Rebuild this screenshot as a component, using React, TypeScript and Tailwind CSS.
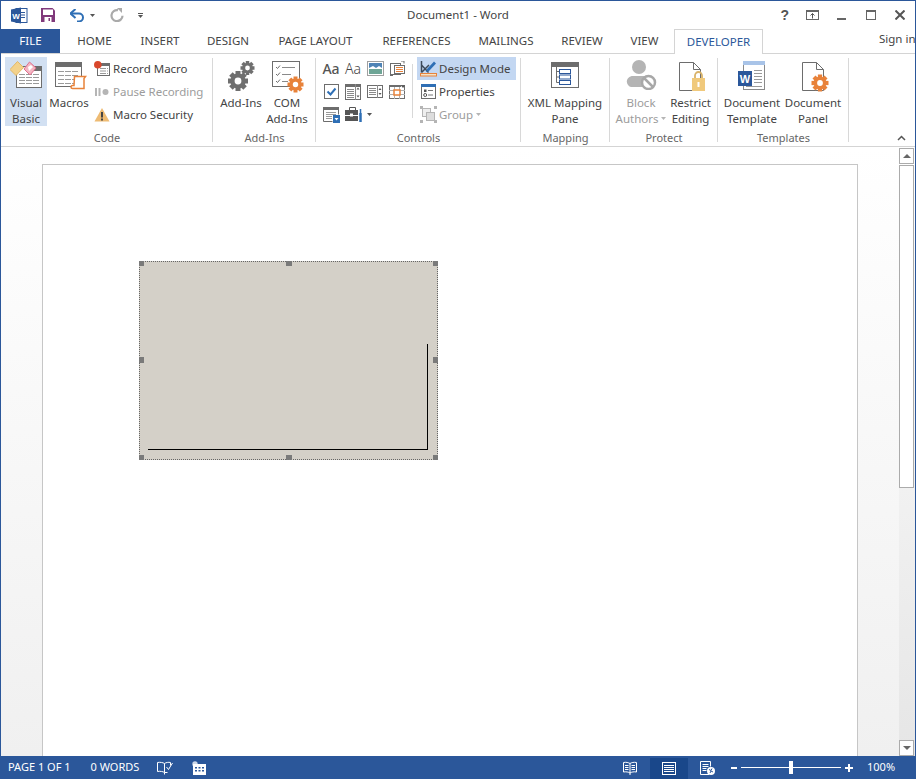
import type { ReactNode } from "react"

const GRAY = "#6f6f6f"
const ORANGE = "#e8823a"
const BLUE = "#2b579a"

function Gear({ x, y, r, color = GRAY, hole = "#ffffff" }: { x: number; y: number; r: number; color?: string; hole?: string }) {
  const teeth = [0, 45, 90, 135, 180, 225, 270, 315]
  const w = r * 0.5
  return (
    <g>
      {teeth.map((a) => (
        <rect key={a} x={x - w / 2} y={y - r} width={w} height={r * 0.5} fill={color} transform={`rotate(${a} ${x} ${y})`} />
      ))}
      <circle cx={x} cy={y} r={r * 0.76} fill={color} />
      <circle cx={x} cy={y} r={r * 0.34} fill={hole} />
    </g>
  )
}

function Sheet({ x, y, w, h, fold = 7, color = "#6d6d6d" }: { x: number; y: number; w: number; h: number; fold?: number; color?: string }) {
  return (
    <path
      d={`M${x + 0.5} ${y + 0.5}h${w - fold}l${fold} ${fold}v${h - fold}h-${w}zM${x + w - fold + 0.5} ${y + 0.5}v${fold}h${fold}`}
      fill="#fff"
      stroke={color}
    />
  )
}

function Icon({ w, h, children, className = "" }: { w: number; h: number; children: ReactNode; className?: string }) {
  return (
    <svg width={w} height={h} viewBox={`0 0 ${w} ${h}`} className={`shrink-0 block ${className}`}>
      {children}
    </svg>
  )
}

function TableLines({ x, y, w, rows, gap = 3, color = "#9a9a9a" }: { x: number; y: number; w: number; rows: number; gap?: number; color?: string }) {
  const lines = Array.from({ length: rows }, (_, i) => i)
  return (
    <>
      {lines.map((i) => (
        <path key={i} d={`M${x} ${y + i * gap + 0.5}h${w}`} stroke={color} strokeDasharray="6 1" />
      ))}
    </>
  )
}

function VisualBasicIcon() {
  return (
    <Icon w={32} h={32}>
      <rect x="6.500" y="6.500" width="25" height="21" fill="#fff" stroke="#6d6d6d" />
      <rect x="24" y="6" width="8" height="5" fill="#6d6d6d" />
      <TableLines x={9} y={14} w={20} rows={4} />
      <path d="M7.500 1.500l6 6-7.500 8-6-6z" fill="#f3d28c" stroke="#e3b867" />
      <path d="M19.500 2l6.500 6-6 7-6-6z" fill="#f4b6c2" stroke="#e06f8e" />
      <path d="M18 7l3-2 2 2-4 4z" fill="#fff" />
    </Icon>
  )
}

function MacrosIcon() {
  return (
    <Icon w={32} h={30}>
      <rect x="0.500" y="0.500" width="26" height="24" fill="#fff" stroke="#6d6d6d" />
      <rect x="0" y="0" width="27" height="5" fill="#6d6d6d" />
      <TableLines x={3} y={9} w={21} rows={4} gap={4} />
      <path d="M19.500 14.500h11l-1.500 2v10h-11.500c-2 0-2-3 0-3h1.500z" fill="#fff" stroke={ORANGE} strokeWidth="1.500" />
    </Icon>
  )
}

function RecordIcon() {
  return (
    <Icon w={16} h={16}>
      <rect x="3.500" y="2.500" width="12" height="12" fill="#fff" stroke="#6d6d6d" />
      <rect x="3" y="2" width="13" height="3" fill="#6d6d6d" />
      <TableLines x={6} y={7} w={8} rows={3} gap={2.500} />
      <circle cx="3.800" cy="3.800" r="3.800" fill="#d9472b" />
    </Icon>
  )
}

function PauseIcon() {
  return (
    <Icon w={16} h={16}>
      <rect x="1" y="4" width="2" height="8" fill="#b5b5b5" />
      <rect x="4.500" y="4" width="2" height="8" fill="#b5b5b5" />
      <circle cx="11.500" cy="8" r="3" fill="#b5b5b5" />
    </Icon>
  )
}

function WarnIcon() {
  return (
    <Icon w={16} h={16}>
      <path d="M8 1l7.500 13.500H.5z" fill="#eebb73" />
      <rect x="7" y="5" width="2" height="5.500" fill="#444" />
      <rect x="7" y="11.500" width="2" height="2" fill="#444" />
    </Icon>
  )
}

function AddInsIcon() {
  return (
    <Icon w={28} h={32}>
      <Gear x={11} y={21} r={10} />
      <Gear x={20.500} y={8} r={7} />
    </Icon>
  )
}

function ComAddInsIcon() {
  return (
    <Icon w={32} h={32}>
      <rect x="0.500" y="0.500" width="27" height="25" fill="#fff" stroke="#6d6d6d" />
      <path d="M4 6l1.500 1.500L8 4.500M4 13l1.500 1.500L8 11.500M4 20l1.500 1.500L8 18.500" fill="none" stroke="#6d6d6d" />
      <path d="M10 6.500h13M10 13.500h9M10 20.500h6" stroke="#8a8a8a" />
      <Gear x={23.500} y={23.500} r={8} color={ORANGE} />
    </Icon>
  )
}

function ImageIcon() {
  return (
    <Icon w={17} h={15}>
      <rect x="0.500" y="0.500" width="16" height="14" fill="#fff" stroke="#a0a0a0" />
      <rect x="2" y="2" width="13" height="5" fill="#4f83b5" />
      <path d="M2 7l4-2 3 2 3-2 3 2v1H2z" fill="#ffffff" />
      <rect x="2" y="8" width="13" height="5" fill="#6ea596" />
    </Icon>
  )
}

function BlockIcon() {
  return (
    <Icon w={15} h={15}>
      <rect x="0.500" y="2.500" width="10" height="11" fill="#fff" stroke="#6d6d6d" />
      <rect x="4.500" y="4.500" width="10" height="8" fill="#fff" stroke="#6d6d6d" />
      <path d="M6 6.500h7M6 8.500h7M6 10.500h7" stroke={ORANGE} />
      <path d="M11 0h3v2.500M0 14.500h3" stroke="#6d6d6d" fill="none" />
    </Icon>
  )
}

function CheckIcon() {
  return (
    <Icon w={15} h={15}>
      <rect x="0.500" y="0.500" width="14" height="14" fill="#fff" stroke="#6d6d6d" />
      <path d="M3.500 7.500l3 3 5-6" fill="none" stroke="#2f6fb5" strokeWidth="2" />
    </Icon>
  )
}

function ComboIcon() {
  return (
    <Icon w={16} h={16}>
      <rect x="0.500" y="0.500" width="15" height="15" fill="#fff" stroke="#6d6d6d" />
      <rect x="0" y="0" width="16" height="3" fill="#6d6d6d" />
      <path d="M2 5.500h7M2 7.500h7M2 9.500h7M2 11.500h7M2 13.500h7M10.500 0v16" stroke="#8a8a8a" />
      <path d="M11.500 5.500h3l-1.500-2zM11.500 11.500h3l-1.500 2z" fill="#555" />
    </Icon>
  )
}

function ListIcon() {
  return (
    <Icon w={16} h={13}>
      <rect x="0.500" y="0.500" width="15" height="12" fill="#fff" stroke="#6d6d6d" />
      <path d="M2 3.500h7M2 5.500h7M2 7.500h7M2 9.500h7M10.500 0v13" stroke="#8a8a8a" />
      <path d="M11.500 5h3L13 3zM11.500 8h3L13 10z" fill="#555" />
    </Icon>
  )
}

function DateIcon() {
  return (
    <Icon w={16} h={14}>
      <rect x="0.500" y="0.500" width="15" height="13" fill="#fff" stroke="#6d6d6d" />
      <rect x="0" y="0" width="12" height="2" fill="#6d6d6d" />
      <path d="M0 5.500h16M0 9.500h16M5.500 2v12M10.500 2v12" stroke="#b0b0b0" />
      <rect x="5" y="5" width="6" height="5" fill="#fff" stroke={ORANGE} strokeWidth="1.500" />
      <path d="M12 0.500h4L14 3z" fill="#555" />
    </Icon>
  )
}

function LegacyIcon() {
  return (
    <Icon w={17} h={16}>
      <path d="M9.500 14.500H.5V.5h15v7" fill="#fff" stroke="#6d6d6d" />
      <rect x="0" y="0" width="16" height="3" fill="#6d6d6d" />
      <path d="M3 5.500h10M3 7.500h10M3 9.500h6M3 11.500h6" stroke="#9a9a9a" />
      <rect x="10" y="8" width="7" height="8" fill="#2f6fb5" />
      <path d="M11.500 11h4l-2 2.500z" fill="#fff" />
    </Icon>
  )
}

function ToolboxIcon() {
  return (
    <Icon w={18} h={15}>
      <path d="M4.500 3V.5h6V3" fill="none" stroke="#555" />
      <rect x="0" y="3" width="13" height="5" fill="#555" />
      <rect x="0" y="9" width="13" height="5" fill="#555" />
      <rect x="5" y="6.500" width="3" height="3" fill="#fff" />
      <path d="M15.500 2v4" stroke="#2f6fb5" strokeWidth="1.500" />
      <path d="M15.500 6v9" stroke="#2f6fb5" strokeWidth="2.500" />
    </Icon>
  )
}

function Caret({ color = "#555" }: { color?: string }) {
  return (
    <Icon w={5} h={3}>
      <path d="M0 0h5L2.500 3z" fill={color} />
    </Icon>
  )
}

function DesignModeIcon() {
  return (
    <Icon w={17} h={17}>
      <path d="M1.500 1v11.500M1.500 12.500L9 5M1.500 5l7 7.500" fill="none" stroke="#3d4a5a" strokeWidth="1.500" />
      <path d="M7 9l7-7.500 2 2L9 11l-3 1z" fill="#2f6fb5" />
      <rect x="0.500" y="13.500" width="16" height="2.500" fill="#f3e3c8" stroke={ORANGE} />
    </Icon>
  )
}

function PropertiesIcon() {
  return (
    <Icon w={15} h={15}>
      <rect x="0.500" y="0.500" width="14" height="14" fill="#fff" stroke="#6d6d6d" />
      <rect x="0" y="0" width="15" height="3" fill="#2f6fb5" />
      <rect x="3" y="5.500" width="2.500" height="2.500" fill="#555" />
      <circle cx="4.200" cy="11" r="1.500" fill="none" stroke="#555" />
      <path d="M7 6.500h5M7 11h5" stroke="#777" />
    </Icon>
  )
}

function GroupIcon() {
  return (
    <Icon w={17} h={17}>
      <rect x="2.500" y="2.500" width="8" height="8" fill="#eee" stroke="#b5b5b5" />
      <rect x="6.500" y="6.500" width="8" height="8" fill="#ddd" stroke="#b5b5b5" />
      <path d="M0 0h3v3H0zM14 0h3v3h-3zM0 14h3v3H0zM14 14h3v3h-3z" fill="#b5b5b5" />
    </Icon>
  )
}

function XmlIcon() {
  return (
    <Icon w={28} h={26}>
      <rect x="0.500" y="0.500" width="27" height="25" fill="#fff" stroke="#6d6d6d" />
      <rect x="0" y="0" width="28" height="5" fill="#6d6d6d" />
      <path d="M5.500 5v15.500H8M5.500 9.500H8M5.500 15H8" fill="none" stroke="#6d6d6d" />
      <rect x="8.500" y="7.500" width="11" height="4" fill="#fff" stroke={BLUE} />
      <rect x="8.500" y="13" width="11" height="4" fill="#fff" stroke={BLUE} />
      <rect x="8.500" y="18.500" width="11" height="4" fill="#fff" stroke={BLUE} />
    </Icon>
  )
}

function BlockAuthorsIcon() {
  return (
    <Icon w={31} h={30}>
      <circle cx="13" cy="7" r="7" fill="#b4b4b4" />
      <path d="M2 25c-3-4 0-9 5-9h12c3 0 4 1 5 2l-6 9H5c-1 0-2-1-3-2z" fill="#b4b4b4" />
      <circle cx="22.500" cy="22.500" r="6.500" fill="#fff" stroke="#a8a8a8" strokeWidth="2.500" />
      <path d="M18 18l9 9" stroke="#a8a8a8" strokeWidth="2.500" />
    </Icon>
  )
}

function RestrictIcon() {
  return (
    <Icon w={27} h={30}>
      <Sheet x={0} y={0} w={21} h={28} />
      <path d="M16 16v-2.500a3 3 0 0 1 7 0V16" fill="none" stroke="#d9b36a" strokeWidth="1.800" />
      <rect x="13" y="16" width="13" height="13" fill="#f0c97c" />
      <rect x="18.500" y="20" width="2" height="5" fill="#fff" />
    </Icon>
  )
}

function TemplateIcon() {
  return (
    <Icon w={28} h={30}>
      <rect x="5.500" y="2.500" width="21" height="26" fill="#fff" stroke="#8a8a8a" />
      <rect x="5" y="0" width="22" height="4" fill="#a9c4e8" />
      <path d="M16 9.500h8M16 12.500h8M16 15.500h8M16 18.500h8M16 21.500h8M8 25.500h16" stroke="#9a9a9a" />
      <rect x="0" y="10" width="14" height="15" fill={BLUE} />
      <text x="7" y="21.500" textAnchor="middle" fill="#fff" fontSize="11" fontWeight="700" fontFamily="Liberation Sans, sans-serif">W</text>
    </Icon>
  )
}

function PanelIcon() {
  return (
    <Icon w={28} h={30}>
      <Sheet x={0} y={0} w={21} h={28} />
      <Gear x={18} y={21} r={8.500} color={ORANGE} />
    </Icon>
  )
}

function WordLogo() {
  return (
    <Icon w={17} h={17}>
      <rect x="5" y="1.500" width="11" height="14" fill="#fff" stroke={BLUE} />
      <path d="M10 5.500h4M10 8h4M10 10.500h4" stroke={BLUE} />
      <path d="M0 2.500L10 .5v16L0 14.500z" fill={BLUE} />
      <text x="5" y="11.500" textAnchor="middle" fill="#fff" fontSize="8" fontWeight="700" fontFamily="Liberation Sans, sans-serif">W</text>
    </Icon>
  )
}

function SaveIcon() {
  return (
    <Icon w={14} h={14}>
      <path d="M0 0h11.500L14 2.500V14H0z" fill="#80397b" />
      <rect x="2" y="1.500" width="10" height="5.500" fill="#fff" />
      <rect x="3.500" y="9" width="7" height="5" fill="#fff" />
      <rect x="7.500" y="10" width="1.500" height="3" fill="#80397b" />
    </Icon>
  )
}

function UndoIcon() {
  return (
    <Icon w={15} h={13}>
      <path d="M2 4.500h7a4 4 0 0 1 0 8H7" fill="none" stroke="#2f6fb5" strokeWidth="2" />
      <path d="M5.500 0L0.500 4.500 5.500 9" fill="none" stroke="#2f6fb5" strokeWidth="2" />
    </Icon>
  )
}

function RedoIcon() {
  return (
    <Icon w={14} h={14}>
      <path d="M8 2.200a5.500 5.500 0 1 0 4.500 5.500" fill="none" stroke="#aaaaaa" strokeWidth="2.200" />
      <path d="M7 0h5v5z" fill="#aaaaaa" />
    </Icon>
  )
}

function LargeButton({ lines, icon, active, muted, caret, className = "" }: { lines: string[]; icon: ReactNode; active?: boolean; muted?: boolean; caret?: boolean; className?: string }) {
  return (
    <div className={`flex flex-col items-center h-[69px] ${active ? "bg-[#d2e0f2]" : ""} ${muted ? "text-[#9c9c9c]" : ""} ${className}`}>
      <div className="h-[38px] pt-[3px] flex justify-center items-start">{icon}</div>
      {lines.map((l, i) => (
        <div key={l} className="leading-[15.500px] whitespace-nowrap flex items-center gap-[3px]">
          {l}
          {caret && i === lines.length - 1 ? <Caret color="#b5b5b5" /> : null}
        </div>
      ))}
    </div>
  )
}

function SmallRow({ icon, label, muted, active, caret }: { icon: ReactNode; label: string; muted?: boolean; active?: boolean; caret?: boolean }) {
  return (
    <div className={`h-[23px] flex items-center ${muted ? "text-[#9c9c9c]" : ""} ${active ? "bg-[#c3d7f2]" : ""}`}>
      <div className="w-[22px] flex justify-center shrink-0">{icon}</div>
      <span className="whitespace-nowrap">{label}</span>
      {caret ? <span className="ml-[3px]"><Caret color="#b5b5b5" /></span> : null}
    </div>
  )
}

function RibbonGroup({ label, className, pad, children }: { label: string; className: string; pad: string; children: ReactNode }) {
  return (
    <div className={`relative flex flex-col shrink-0 ${className}`}>
      <div className={`flex h-[69px] mt-[3px] ${pad}`}>{children}</div>
      <div className="text-center text-[#666] text-[11px] leading-[15px] mt-[4px]">{label}</div>
      <div className="absolute right-0 top-[4px] bottom-[4px] w-px bg-[#d8d8d8]" />
    </div>
  )
}

const tabs = [
  { name: "HOME", w: "w-[65px] ml-[2px]" },
  { name: "INSERT", w: "w-[66px]" },
  { name: "DESIGN", w: "w-[70px]" },
  { name: "PAGE LAYOUT", w: "w-[105px]" },
  { name: "REFERENCES", w: "w-[97px]" },
  { name: "MAILINGS", w: "w-[82px]" },
  { name: "REVIEW", w: "w-[70px]" },
  { name: "VIEW", w: "w-[55px]" },
]

function Handle({ className }: { className: string }) {
  return <div className={`absolute w-[5px] h-[5px] bg-[#7a7a7a] ${className}`} />
}

export default function App() {
  return (
    <div className="h-screen w-full flex flex-col overflow-hidden bg-white border-x border-t border-[#2b579a] text-[#444] text-[11.500px] font-['Noto_Sans',sans-serif]">
      {/* title bar */}
      <div className="h-[28px] grid grid-cols-[1fr_auto_1fr] items-center shrink-0">
        <div className="flex items-center pl-[10px]">
          <WordLogo />
          <span className="ml-[13px]"><SaveIcon /></span>
          <span className="ml-[15px]"><UndoIcon /></span>
          <span className="ml-[5px]"><Caret /></span>
          <span className="ml-[15px]"><RedoIcon /></span>
          <span className="ml-[14px] flex flex-col gap-[1px]">
            <span className="block w-[5px] h-px bg-[#555]" />
            <Caret />
          </span>
        </div>
        <div className="text-[#444]">Document1 - Word</div>
        <div className="flex items-center justify-end pr-[10px] text-[#555]">
          <span className="font-bold text-[14px] leading-none font-['Liberation_Sans',sans-serif]">?</span>
          <span className="ml-[17px]">
            <Icon w={13} h={10}>
              <rect x="0.500" y="0.500" width="12" height="9" fill="none" stroke="#666" />
              <rect x="0" y="0" width="13" height="2" fill="#666" />
              <path d="M6.500 3.500v5M4.500 5.500l2-2 2 2" fill="none" stroke="#555" />
            </Icon>
          </span>
          <span className="ml-[18px] w-[9px] h-[2px] mt-[8px] bg-[#666]" />
          <span className="ml-[20px] w-[10px] h-[10px] border border-t-2 border-[#666]" />
          <span className="ml-[19px]">
            <Icon w={10} h={10}>
              <path d="M0.500 0.500l9 9M9.500 0.500l-9 9" stroke="#555" strokeWidth="2" />
            </Icon>
          </span>
        </div>
      </div>

      {/* tabs */}
      <div className="h-[25px] flex shrink-0 border-b border-[#d4d4d4]">
        <div className="w-[59px] bg-[#2b579a] text-white flex items-center justify-center">FILE</div>
        {tabs.map((t) => (
          <div key={t.name} className={`${t.w} flex items-center justify-center whitespace-nowrap`}>{t.name}</div>
        ))}
        <div className="ml-[2px] w-[89px] h-[25px] bg-white border-x border-t border-[#d4d4d4] text-[#2b579a] flex items-center justify-center">DEVELOPER</div>
        <div className="ml-auto w-[36px] overflow-hidden whitespace-nowrap pt-px">Sign in</div>
      </div>

      {/* ribbon */}
      <div className="relative h-[93px] flex shrink-0 border-b border-[#d4d4d4]">
        <RibbonGroup label="Code" className="w-[212px]" pad="pl-[4px]">
          <LargeButton className="w-[42px]" active lines={["Visual", "Basic"]} icon={<VisualBasicIcon />} />
          <LargeButton className="w-[44px]" lines={["Macros"]} icon={<span className="block ml-[3px] mt-[2px]"><MacrosIcon /></span>} />
          <div>
            <SmallRow icon={<RecordIcon />} label="Record Macro" />
            <SmallRow icon={<PauseIcon />} label="Pause Recording" muted />
            <SmallRow icon={<WarnIcon />} label="Macro Security" />
          </div>
        </RibbonGroup>

        <RibbonGroup label="Add-Ins" className="w-[103px]" pad="pl-[5px]">
          <LargeButton className="w-[46px]" lines={["Add-Ins"]} icon={<AddInsIcon />} />
          <LargeButton className="w-[46px]" lines={["COM", "Add-Ins"]} icon={<span className="block ml-[2px] mt-[1px]"><ComAddInsIcon /></span>} />
        </RibbonGroup>

        <RibbonGroup label="Controls" className="w-[205px]" pad="pl-[4px]">
          <div className="grid grid-cols-[22px_22px_22px_22px] grid-rows-[23px_23px_23px] items-center justify-items-center w-[90px]">
            <span className="text-[14px] leading-none text-[#555] font-medium">Aa</span>
            <span className="text-[14px] leading-none text-[#444] font-light">Aa</span>
            <ImageIcon />
            <BlockIcon />
            <CheckIcon />
            <ComboIcon />
            <ListIcon />
            <DateIcon />
            <LegacyIcon />
            <span className="col-span-3 justify-self-start flex items-center gap-[4px] ml-[3px]">
              <ToolboxIcon />
              <Caret />
            </span>
          </div>
          <div className="w-px h-[54px] bg-[#d8d8d8] mt-[7px] ml-[2px] mr-[4px]" />
          <div className="w-[99px]">
            <SmallRow icon={<DesignModeIcon />} label="Design Mode" active />
            <SmallRow icon={<PropertiesIcon />} label="Properties" />
            <SmallRow icon={<GroupIcon />} label="Group" muted caret />
          </div>
        </RibbonGroup>

        <RibbonGroup label="Mapping" className="w-[89px]" pad="pl-[4px]">
          <LargeButton className="w-[80px]" lines={["XML Mapping", "Pane"]} icon={<span className="block mt-[2px]"><XmlIcon /></span>} />
        </RibbonGroup>

        <RibbonGroup label="Protect" className="w-[108px]" pad="pl-[6px]">
          <LargeButton className="w-[50px]" muted caret lines={["Block", "Authors"]} icon={<BlockAuthorsIcon />} />
          <LargeButton className="w-[49px]" lines={["Restrict", "Editing"]} icon={<span className="block ml-[3px] mt-[2px]"><RestrictIcon /></span>} />
        </RibbonGroup>

        <RibbonGroup label="Templates" className="w-[131px]" pad="pl-[5px]">
          <LargeButton className="w-[58px]" lines={["Document", "Template"]} icon={<span className="block mt-[1px]"><TemplateIcon /></span>} />
          <LargeButton className="w-[64px]" lines={["Document", "Panel"]} icon={<span className="block ml-[5px] mt-[2px]"><PanelIcon /></span>} />
        </RibbonGroup>

        <div className="absolute right-[9px] bottom-[5px]">
          <Icon w={9} h={6}>
            <path d="M1 5l3.500-3.500L8 5" fill="none" stroke="#555" strokeWidth="1.500" />
          </Icon>
        </div>
      </div>

      {/* document */}
      <div className="flex-1 min-h-0 flex bg-linear-to-b from-[#ffffff] to-[#f0f0f0]">
        <div className="flex-1 min-w-0 overflow-hidden pl-[41px] pt-[17px]">
          <div className="w-[816px] h-[700px] bg-white border border-[#c6c6c6] pl-[96px] pt-[96px]">
            <div className="relative w-[299px] h-[199px] bg-[#d4d0c8] border border-dotted border-[#666]">
              <Handle className="-left-px -top-px" />
              <Handle className="left-[146px] -top-px w-[6px]" />
              <Handle className="-right-px -top-px" />
              <Handle className="-left-px top-[95px] h-[6px]" />
              <Handle className="-right-px top-[95px] h-[6px]" />
              <Handle className="-left-px -bottom-px" />
              <Handle className="left-[146px] -bottom-px w-[6px]" />
              <Handle className="-right-px -bottom-px" />
              <div className="absolute left-[287px] top-[82px] w-px h-[106px] bg-black" />
              <div className="absolute left-[8px] top-[187px] w-[280px] h-px bg-black" />
            </div>
          </div>
        </div>
        <div className="w-[16px] shrink-0 bg-linear-to-b from-[#ffffff] to-[#e6e6e6] flex flex-col pt-px pr-px">
          <div className="h-[16px] bg-white border border-[#ababab] flex items-center justify-center shrink-0">
            <Icon w={8} h={4}><path d="M0 4h8L4 0z" fill="#666" /></Icon>
          </div>
          <div className="h-[323px] mt-px bg-white border border-[#ababab] shrink-0" />
          <div className="mt-auto h-[16px] bg-white border border-[#ababab] flex flex-col items-center justify-center gap-px shrink-0">
            <Icon w={8} h={4}><path d="M0 0h8L4 4z" fill="#666" /></Icon>
          </div>
        </div>
      </div>

      {/* status bar */}
      <div className="h-[23px] shrink-0 bg-[#2b579a] text-white text-[11px] flex items-center pl-[7px]">
        <span className="whitespace-nowrap">PAGE 1 OF 1</span>
        <span className="ml-[20px] whitespace-nowrap">0 WORDS</span>
        <span className="ml-[18px]">
          <Icon w={16} h={14}>
            <path d="M7.500 2.500C6 1.500 3 1 .5 1.500v9c2.500-.5 5.500 0 7 1v2M7.500 2.500v9M7.500 2.500c1.500-1 4-1.500 6-1v3M7.500 11.500l3 0" fill="none" stroke="#fff" />
            <path d="M9.500 6l2 2.500L15.500 2" fill="none" stroke="#fff" />
          </Icon>
        </span>
        <span className="ml-[19px]">
          <Icon w={14} h={14}>
            <circle cx="3" cy="3" r="2.700" fill="#cfd9e8" />
            <rect x="1" y="3" width="13" height="11" fill="#fff" />
            <rect x="3" y="6" width="2" height="1.500" fill="#2b579a" />
            <rect x="6.500" y="6" width="2" height="1.500" fill="#2b579a" />
            <rect x="10" y="6" width="2" height="1.500" fill="#2b579a" />
            <rect x="3" y="9" width="2" height="1.500" fill="#2b579a" />
            <rect x="6.500" y="9" width="2" height="1.500" fill="#2b579a" />
            <rect x="10" y="9" width="2" height="1.500" fill="#2b579a" />
          </Icon>
        </span>
        <div className="ml-auto flex items-center h-full">
          <span className="mr-[13px]">
            <Icon w={14} h={14}>
              <path d="M7 2.500C5.500 1.500 3 1 .5 1.500v9.500c2.500-.5 5 0 6.500 1 1.500-1 4-1.500 6.500-1V1.500C11 1 8.500 1.500 7 2.500zM7 2.500V14M2 4.500h3.500M2 6.500h3.500M2 8.500h3.500M8.500 4.500H12M8.500 6.500H12M8.500 8.500H12" fill="none" stroke="#fff" />
            </Icon>
          </span>
          <div className="w-[38px] h-[21px] mt-[1px] bg-[#19478a] flex items-center justify-center">
            <Icon w={14} h={13}>
              <rect x="0.500" y="0.500" width="13" height="12" fill="none" stroke="#fff" />
              <path d="M2 3.500h10M2 5.500h10M2 7.500h10M2 9.500h10" stroke="#fff" />
            </Icon>
          </div>
          <span className="ml-[12px]">
            <Icon w={15} h={14}>
              <path d="M9 13.500H.5V.5h10v5" fill="none" stroke="#fff" />
              <path d="M2.500 3.500h6M2.500 5.500h6M2.500 7.500h4M2.500 9.500h4" stroke="#fff" />
              <circle cx="11" cy="10" r="4" fill="#fff" />
              <path d="M9 8.500l2 1 1-2M10 12l1-2 2 1" stroke="#2b579a" fill="none" />
            </Icon>
          </span>
          <span className="ml-[16px] w-[6px] h-[2px] bg-white" />
          <div className="relative ml-[4px] w-[100px] h-px bg-white">
            <div className="absolute left-[48px] -top-[6px] w-[4px] h-[13px] bg-white" />
          </div>
          <span className="ml-[4px]">
            <Icon w={8} h={8}>
              <path d="M4 0v8M0 4h8" stroke="#fff" strokeWidth="2" />
            </Icon>
          </span>
          <span className="ml-[14px] mr-[20px] w-[28px] whitespace-nowrap">100%</span>
        </div>
      </div>
    </div>
  )
}
